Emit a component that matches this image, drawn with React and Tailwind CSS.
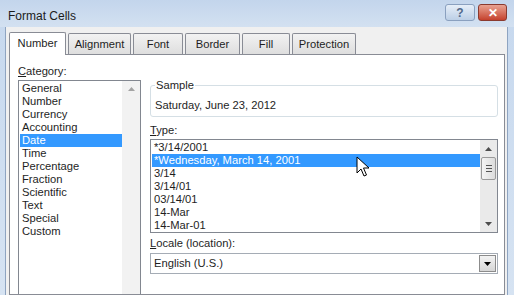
const CATEGORIES = ['General', 'Number', 'Currency', 'Accounting', 'Date', 'Time', 'Percentage', 'Fraction', 'Scientific', 'Text', 'Special', 'Custom'];
const TYPES = ['*3/14/2001', '*Wednesday, March 14, 2001', '3/14', '3/14/01', '03/14/01', '14-Mar', '14-Mar-01'];
const TABS = [
  { label: 'Number', w: 'w-[57px]' },
  { label: 'Alignment', w: 'w-[63px]' },
  { label: 'Font', w: 'w-[50px]' },
  { label: 'Border', w: 'w-[55px]' },
  { label: 'Fill', w: 'w-[48px]' },
  { label: 'Protection', w: 'w-[64px]' },
];

function UpArrow({ color = '#4d4d4d' }) {
  return (
    <svg width="7" height="4" viewBox="0 0 7 4"><path d="M0 4 L3.5 0 L7 4 Z" fill={color} /></svg>
  );
}

function DownArrow({ color = '#4d4d4d' }) {
  return (
    <svg width="7" height="4" viewBox="0 0 7 4"><path d="M0 0 L7 0 L3.5 4 Z" fill={color} /></svg>
  );
}

function Cursor() {
  return (
    <svg className="absolute left-[356px] top-[156px]" width="14" height="22" viewBox="0 0 14 22">
      <path d="M1 1 L1 17 L5 13 L8 20 L10.5 19 L7.5 12 L13 12 Z" fill="#fff" stroke="#000" strokeWidth="1" strokeLinejoin="miter" />
    </svg>
  );
}

export default function App() {
  return (
    <div className="relative w-[514px] h-[295px] overflow-hidden bg-gradient-to-b from-[#c6d8ee] to-[#d6e3f2] text-[11.2px] text-[#1e1e1e]" style={{ fontFamily: '"Liberation Sans", Arial, sans-serif' }}>
      {/* title bar */}
      <div className="h-[27px] flex items-start justify-between pl-[8px] pr-[7px] bg-gradient-to-b from-[#c3d5ec] to-[#d3e1f1]">
        <span className="mt-[7px] text-[12px] text-[#1b1b1b]">Format Cells</span>
        <div className="flex gap-[3px] mt-[4px]">
          <div className="w-[30px] h-[17px] rounded-[3px] border border-[#8aa0bf] bg-gradient-to-b from-[#e6eef8] to-[#bccfe6] flex items-center justify-center text-[12px] text-[#51688a] font-bold">?</div>
          <div className="w-[29px] h-[17px] rounded-[3px] border border-[#8a3a2f] bg-gradient-to-b from-[#e8a292] to-[#c4402c] flex items-center justify-center text-[12px] text-white font-bold">✕</div>
        </div>
      </div>

      {/* body */}
      <div className="absolute left-[5px] right-[6px] top-[27px] bottom-0 bg-[#f0f0f0] border-l border-r border-[#8ea4c1]">
        {/* tabs */}
        <div className="flex items-end pl-[3px] h-[27px] gap-[2px]">
          {TABS.map((t, i) => i === 0 ? (
            <div key={t.label} className={`${t.w} h-[23px] bg-white border border-b-0 border-[#898c95] rounded-t-[2px] flex items-center justify-center relative z-10 -mb-px pb-[1px]`}>{t.label}</div>
          ) : (
            <div key={t.label} className={`${t.w} h-[21px] bg-gradient-to-b from-[#f2f2f2] to-[#dedede] border border-b-0 border-[#898c95] rounded-t-[2px] flex items-center justify-center`}>{t.label}</div>
          ))}
        </div>

        {/* panel */}
        <div className="absolute left-[3px] right-[2px] top-[27px] bottom-0 bg-white border border-[#898c95] flex gap-[9px] pl-[8px] pr-[6px]">
          {/* category column */}
          <div className="w-[123px] flex flex-col pt-[8px]">
            <div className="h-[17px] leading-[17px]"><span className="underline">C</span>ategory:</div>
            <div className="flex-1 border border-[#828790] border-b-0 flex">
              <div className="flex-1 flex flex-col pt-[1px] pl-[1px]">
                {CATEGORIES.map((c) => (
                  <div key={c} className={`h-[13px] leading-[13px] pl-[2px] ${c === 'Date' ? 'bg-[#3399ff] text-white' : ''}`}>{c}</div>
                ))}
              </div>
              <div className="w-[18px] bg-[#f2f2f2] flex flex-col items-center pt-[6px]">
                <UpArrow color="#a3a3a3" />
              </div>
            </div>
          </div>

          {/* right column */}
          <div className="flex-1 flex flex-col pt-[30px]">
            <div className="relative h-[32px] border border-[#d5dfe5] rounded-[3px]">
              <span className="absolute left-[4px] -top-[8px] bg-white px-[1px] leading-[14px]">Sample</span>
              <div className="absolute left-[4px] top-[12px] leading-[14px]">Saturday, June 23, 2012</div>
            </div>
            <div className="mt-[6px] h-[14px] leading-[14px]"><span className="underline">T</span>ype:</div>
            <div className="mt-[2px] h-[94px] border border-[#828790] flex">
              <div className="flex-1 flex flex-col pt-[1px] pl-[1px]">
                {TYPES.map((t, i) => (
                  <div key={t} className={`h-[13px] leading-[13px] pl-[2px] ${i === 1 ? 'bg-[#3399ff] text-white' : ''}`}>{t}</div>
                ))}
              </div>
              <div className="w-[17px] bg-[#eaeaea] flex flex-col items-center">
                <div className="h-[17px] flex items-center justify-center"><UpArrow /></div>
                <div className="w-[15px] h-[23px] border border-[#9a9a9a] rounded-[2px] bg-gradient-to-r from-[#f4f4f4] to-[#dcdcdc] flex flex-col items-center justify-center gap-[2px]">
                  <div className="w-[6px] h-px bg-[#555]" />
                  <div className="w-[6px] h-px bg-[#555]" />
                  <div className="w-[6px] h-px bg-[#555]" />
                </div>
                <div className="flex-1" />
                <div className="h-[17px] flex items-center justify-center"><DownArrow /></div>
              </div>
            </div>
            <div className="mt-[3px] h-[14px] leading-[14px]"><span className="underline">L</span>ocale (location):</div>
            <div className="mt-[3px] h-[21px] border border-[#a5acb5] flex items-center">
              <div className="flex-1 pl-[3px]">English (U.S.)</div>
              <div className="w-[17px] h-[17px] mr-[1px] border border-[#8c8c8c] bg-gradient-to-b from-[#f3f3f3] to-[#d6d6d6] flex items-center justify-center">
                <DownArrow color="#000" />
              </div>
            </div>
          </div>
        </div>
      </div>
      <Cursor />
    </div>
  );
}
